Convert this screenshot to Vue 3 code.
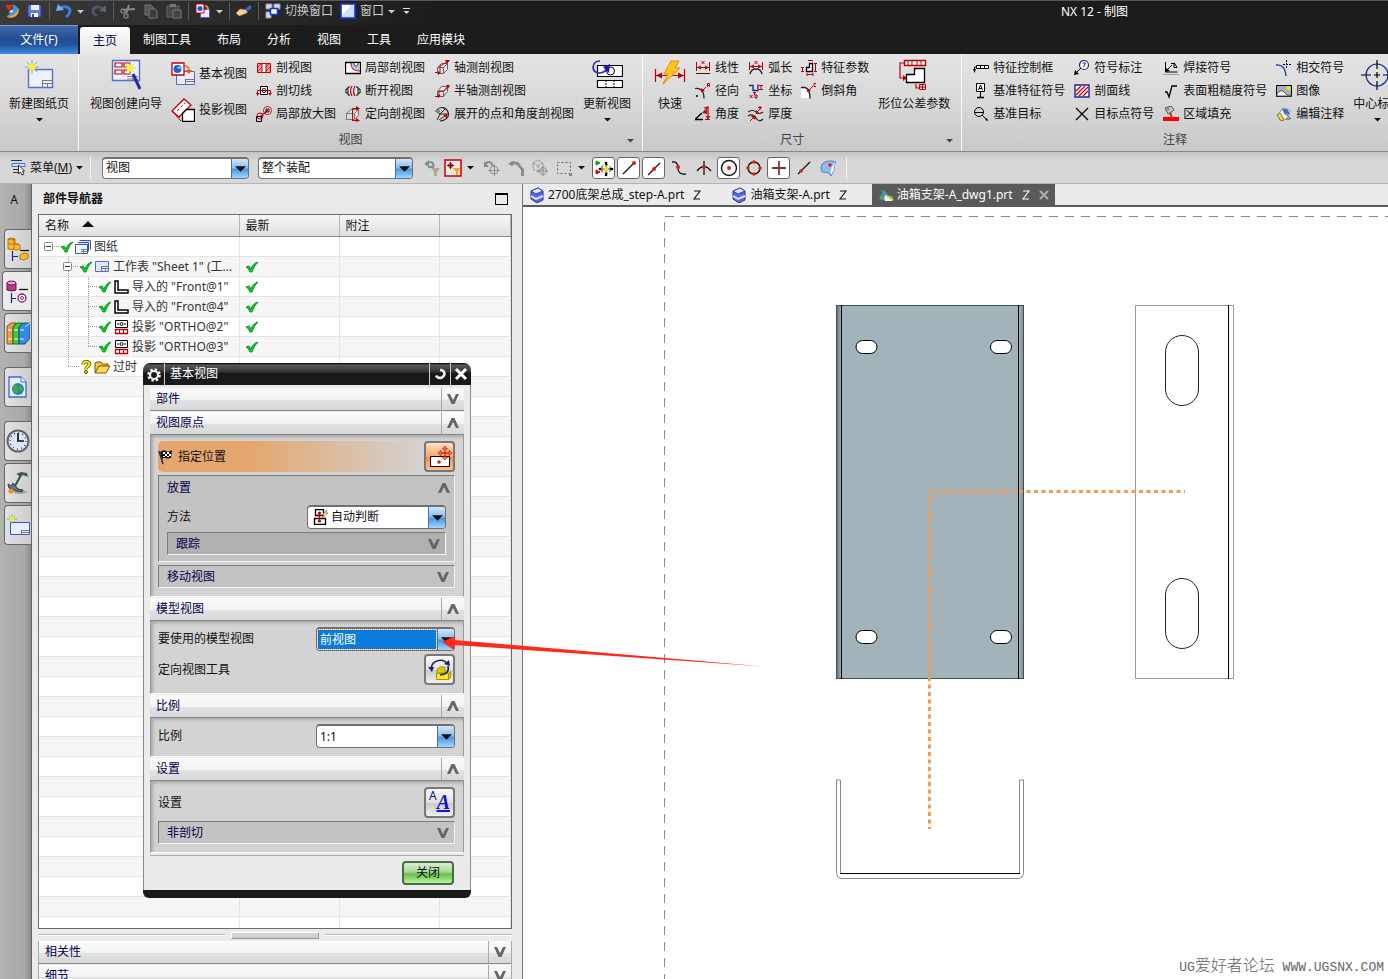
<template>
  <div class="app">
    <!-- Quick access bar -->
    <header class="titlebar">
      <div class="quick">
        <Icon name="logo" />
        <button v-for="q in quickLeft" :key="q.icon" :class="['quick-btn', { sep: q.sep }]" :aria-label="q.label">
          <Icon :name="q.icon" />
          <Icon v-if="q.drop" name="caret" class="quick-caret" :size="7" />
        </button>
        <button class="quick-btn sep text"><Icon name="windows" />切换窗口</button>
        <button class="quick-btn text"><Icon name="win" />窗口<Icon name="caret" :size="7" /></button>
        <button class="quick-btn" aria-label="自定义"><Icon name="customize" :size="9" /></button>
      </div>
      <h1 class="app-title">NX 12 - 制图</h1>
    </header>

    <!-- Ribbon tabs -->
    <nav class="tabs">
      <button class="file-tab">文件(F)</button>
      <button v-for="t in tabs" :key="t" :class="['tab', { active: t === '主页' }]">{{ t }}</button>
    </nav>

    <!-- Ribbon -->
    <section class="ribbon">
      <div v-for="(g, gi) in groups" :key="gi" :class="['group', { last: gi === 3 }]">
        <div class="group-body">
          <div v-for="(col, ci) in g.cols" :key="ci" :class="['col', col.type]">
            <button v-for="b in col.items" :key="b[1]" class="rb">
              <Icon :name="b[0]" :size="sizes[col.type]" />
              <span>{{ b[1] }}</span>
              <Icon v-if="b[2]" name="caret" class="rb-caret" :size="7" />
            </button>
          </div>
        </div>
        <div :class="['group-label', { wide: g.launcher }]">
          {{ g.label }}
          <Icon v-if="g.launcher" name="caret" class="launcher" :size="7" />
        </div>
      </div>
    </section>

    <!-- Selection bar -->
    <section class="selbar">
      <button class="menu-btn">
        <Icon name="menu" /><span>菜单(<u>M</u>)</span><Icon name="caret" :size="7" />
      </button>
      <div class="combo filter">
        <select aria-label="类型过滤器"><option>视图</option></select>
        <span class="combo-arrow"><Icon name="caret" :size="11" /></span>
      </div>
      <div class="combo scope">
        <select aria-label="选择范围"><option>整个装配</option></select>
        <span class="combo-arrow"><Icon name="caret" :size="11" /></span>
      </div>
      <div class="sel-tools">
        <button v-for="s in selTools" :key="s.icon" :class="['sel-btn', { drop: s.drop }]" :aria-label="s.icon">
          <Icon :name="s.icon" :size="18" /><Icon v-if="s.drop" name="caret" :size="7" />
        </button>
      </div>
      <div class="snap-tools">
        <button v-for="s in snaps" :key="s[0]" :class="['snap', { on: s[1] }]" :aria-label="s[0]">
          <Icon :name="s[0]" :size="20" />
        </button>
      </div>
    </section>

    <main class="work">
      <!-- Resource bar -->
      <aside class="rail">
        <span class="rail-a">A</span>
        <button v-for="r in rail" :key="r[0]" :class="['rail-btn', r[1]]" :aria-label="r[0]">
          <Icon :name="r[0]" :size="24" />
        </button>
      </aside>

      <!-- Part navigator -->
      <section class="nav">
        <div class="nav-head">
          <h2>部件导航器</h2>
          <button class="nav-max" aria-label="最大化"></button>
        </div>
        <div class="tree-wrap">
          <table class="tree">
            <colgroup><col class="c-name" /><col class="c-new" /><col class="c-new" /><col /></colgroup>
            <thead>
              <tr>
                <th>名称 <Icon name="sort" class="sort" :size="12" /></th>
                <th>最新</th>
                <th>附注</th>
                <th></th>
              </tr>
            </thead>
            <tbody>
              <tr v-for="(r, i) in treeRows" :key="i">
                <td>
                  <div v-if="r.text" class="node">
                    <svg class="guide" :width="19 + r.level * 19" height="20" v-html="r.guide"></svg>
                    <Icon :name="r.mark" :size="14" />
                    <Icon :name="r.icon" />
                    <span>{{ r.text }}</span>
                  </div>
                </td>
                <td><Icon v-if="r.fresh" name="check" class="fresh" :size="14" /></td>
                <td></td>
                <td></td>
              </tr>
            </tbody>
          </table>
        </div>
        <div class="splitter"><i></i><b></b><i></i></div>
        <div class="nav-foot">
          <button v-for="s in ['相关性', '细节']" :key="s" class="bar">
            <span>{{ s }}</span><span class="bar-arrow"><Icon name="down" :size="14" /></span>
          </button>
        </div>
      </section>

      <!-- Drawing window -->
      <section class="view">
        <div class="docs">
          <button v-for="d in docs" :key="d.name" :class="['doc', { active: d.active }]">
            <Icon :name="d.active ? 'dwg' : 'part'" />
            <span>{{ d.name }}</span>
            <Icon name="mod" :size="10" />
            <Icon v-if="d.active" name="x" :size="10" />
          </button>
        </div>
        <div class="canvas">
          <svg class="drawing" width="100%" height="100%">
            <defs>
              <linearGradient id="bendL"><stop offset="0" stop-color="#5f7275" /><stop offset="1" stop-color="#a2b4ba" /></linearGradient>
              <linearGradient id="bendR"><stop offset="0" stop-color="#a2b4ba" /><stop offset="1" stop-color="#7d9095" /></linearGradient>
            </defs>
            <g transform="translate(-524 -207)" fill="none" shape-rendering="crispEdges">
              <path d="M664.5 979V216.5" stroke="#888" stroke-dasharray="9 7" stroke-dashoffset="4" />
              <path d="M665 216.5H1400" stroke="#888" stroke-dasharray="9 7" />
              <rect x="836.5" y="305.5" width="187" height="373" fill="#a2b4ba" stroke="#444d50" />
              <rect x="837" y="306" width="4" height="372" fill="url(#bendL)" />
              <rect x="1019" y="306" width="4" height="372" fill="url(#bendR)" />
              <path d="M841.5 305V679M1018.5 305V679" stroke="#000" />
              <g fill="#fff" stroke="#000" shape-rendering="auto">
                <rect v-for="hole in holes" :key="hole.join()" :x="hole[0]" :y="hole[1]" width="21" height="13" rx="6.5" />
              </g>
              <rect x="1135.5" y="305.5" width="98" height="373" stroke="#999" />
              <path d="M1228.5 305V679" stroke="#000" />
              <g stroke="#222" shape-rendering="auto">
                <rect x="1165.5" y="335.5" width="33" height="70" rx="16.5" />
                <rect x="1165.5" y="578.5" width="33" height="70" rx="16.5" />
              </g>
              <g shape-rendering="auto">
                <path d="M836.5 780V873.5Q837 878 841 878.5H1019Q1023 878 1023.5 873.5V780H1019.5V873.5M836.5 780H840.5V873.5" stroke="#888" />
                <path d="M840 873.5H1020" stroke="#000" />
              </g>
              <g stroke="#f79a4b" stroke-width="3" shape-rendering="auto">
                <path d="M929 491.5H1185" stroke-dasharray="4 3.5" />
                <path d="M929.5 497V829" stroke-dasharray="4 3.5" />
              </g>
            </g>
          </svg>
          <p class="watermark">UG<span>爱好者论坛</span> WWW.UGSNX.COM</p>
        </div>
      </section>
    </main>

    <!-- Base view dialog -->
    <div class="dialog" role="dialog" aria-label="基本视图">
      <div class="dlg-head">
        <button class="dlg-gear" aria-label="选项"><Icon name="gear" /></button>
        <span class="dlg-title">基本视图</span>
        <button class="dlg-ctl" aria-label="重置"><Icon name="reset" :size="14" /></button>
        <button class="dlg-ctl" aria-label="关闭对话框"><Icon name="close" :size="14" /></button>
      </div>
      <div class="dlg-body">
        <button class="bar"><span>部件</span><span class="bar-arrow"><Icon name="down" :size="14" /></span></button>
        <button class="bar open"><span>视图原点</span><span class="bar-arrow"><Icon name="up" :size="14" /></span></button>
        <div class="sect">
          <div class="pick">
            <Icon name="flag" /><span>指定位置</span>
            <button class="tool hot" aria-label="指定位置"><Icon name="place" :size="24" /></button>
          </div>
          <div class="sub">
            <button class="sub-head"><span>放置</span><Icon name="up" :size="14" /></button>
            <div class="row inner">
              <label for="method">方法</label>
              <div class="combo">
                <Icon name="infer" class="combo-icon" />
                <select id="method"><option>自动判断</option></select>
                <span class="combo-arrow"><Icon name="caret" :size="11" /></span>
              </div>
            </div>
            <button class="sub-head nested"><span>跟踪</span><Icon name="down" :size="14" /></button>
          </div>
          <button class="sub-head boxed"><span>移动视图</span><Icon name="down" :size="14" /></button>
        </div>

        <button class="bar open"><span>模型视图</span><span class="bar-arrow"><Icon name="up" :size="14" /></span></button>
        <div class="sect">
          <div class="row">
            <label for="model-view">要使用的模型视图</label>
            <div class="combo picked">
              <select id="model-view"><option>前视图</option></select>
              <span class="combo-arrow"><Icon name="caret" :size="11" /></span>
            </div>
          </div>
          <div class="row tall">
            <span>定向视图工具</span>
            <button class="tool" aria-label="定向视图工具"><Icon name="orient" :size="24" /></button>
          </div>
        </div>

        <button class="bar open"><span>比例</span><span class="bar-arrow"><Icon name="up" :size="14" /></span></button>
        <div class="sect">
          <div class="row">
            <label for="scale">比例</label>
            <div class="combo">
              <select id="scale"><option>1:1</option></select>
              <span class="combo-arrow"><Icon name="caret" :size="11" /></span>
            </div>
          </div>
        </div>

        <button class="bar open"><span>设置</span><span class="bar-arrow"><Icon name="up" :size="14" /></span></button>
        <div class="sect">
          <div class="row tall">
            <span>设置</span>
            <button class="tool aa" aria-label="设置"><small>A</small><em>A</em></button>
          </div>
          <button class="sub-head boxed"><span>非剖切</span><Icon name="down" :size="14" /></button>
        </div>
        <div class="dlg-foot"><button class="ok">关闭</button></div>
      </div>
    </div>

    <svg class="pointer" width="330" height="40" viewBox="0 0 330 40">
      <path d="M0 9L13 3L12 7L323 33.5L12 12L12 17Z" fill="#ff2a1a" />
    </svg>
  </div>
</template>

<script setup>
import { h } from 'vue'

const R = '#c00008'
const icons = {
  caret: [7, '<path d="M0 2h7L3.5 5.5z" fill="currentColor"/>'],
  customize: [9, '<path d="M1 1.5h7" stroke="#ddd"/><path d="M1.5 4h6L4.5 7z" fill="#ddd"/>'],
  sort: [12, '<path d="M0 9L6 3l6 6z" fill="#111"/>'],
  down: [14, '<path d="M1 2h3l3 6 3-6h3L8.5 12h-3z" fill="#666"/>'],
  up: [14, '<path d="M1 12h3l3-6 3 6h3L8.5 2h-3z" fill="#666"/>'],
  mod: [10, '<path d="M2 1h6L2 9h6" fill="none" stroke="currentColor" stroke-width="1.1"/>'],
  x: [10, '<path d="M1 1l8 8M9 1l-8 8" stroke="#aaa" stroke-width="2.4"/>'],
  close: [14, '<path d="M2 2l10 10M12 2L2 12" stroke="#fff" stroke-width="3"/>'],
  reset: [14, '<path d="M7 3c5 0 6 5 2 7.500-3 1-5 0-6-2" fill="none" stroke="#eee" stroke-width="2.6"/>'],
  gear: [16, '<circle cx="8" cy="9" r="5.500" fill="none" stroke="#eee" stroke-width="2.600" stroke-dasharray="2.300 2.020"/><circle cx="8" cy="9" r="4" fill="none" stroke="#eee" stroke-width="2.200"/>'],
  check: [14, '<path d="M1 7l3-1 2 3c1-3 3-6 7-7-3 3-4.500 6-6 10H5C4 10 3 8 1 7z" fill="#17c92f" stroke="#079a1c"/>'],
  quest: [14, '<path d="M4 5c0-5 8-4 6 0C9 7 7 7 7 9.500" fill="none" stroke="#555000" stroke-width="3.400"/><path d="M4 5c0-5 8-4 6 0C9 7 7 7 7 9.500" fill="none" stroke="#f4ee10" stroke-width="2"/><circle cx="7" cy="12" r="1.500" fill="#f4ee10" stroke="#555000"/>'],

  // quick access
  logo: [18, '<path d="M3 15C8 11 11 8 10 2c6 1 8 6 3 11-3 3-7 3-10 2z" fill="#3b9be0"/><path d="M3 15c8 0 13-5 13-10 2 4 0 9-5 11-3 1-6 1-8-1z" fill="#f5a31d"/><path d="M1 2l10 0-5 7z" fill="#e02b20"/><path d="M5 11l4-4 1 3z" fill="#fff"/>'],
  save: [16, '<path d="M1 2h13v12H2L1 13z" fill="#5f7ce0" stroke="#2b3f9c"/><path d="M4 2h8v5H4z" fill="#eef"/><path d="M4 10h7v4H4z" fill="#fff"/><path d="M5 11h2v3H5z" fill="#34c"/>'],
  undo: [16, '<path d="M4 5c6-3 10 0 10 3s-2 4-4 6" fill="none" stroke="#3f7bd6" stroke-width="3"/><path d="M0 8l2-7 6 6z" fill="#79aaf0"/>'],
  redo: [16, '<path d="M12 6C7 2 2 4 2 8c0 3 2 4 4 5" fill="none" stroke="#4a5562" stroke-width="3"/><path d="M15 9V2L8 8z" fill="#5a6674"/>'],
  cut: [16, '<path d="M3 7l12-1M6 11L9 2" stroke="#8a8a80" stroke-width="2"/><circle cx="3" cy="8" r="2" fill="none" stroke="#777" stroke-width="1.500"/><circle cx="6" cy="13" r="2" fill="none" stroke="#777" stroke-width="1.500"/>'],
  copy: [16, '<path d="M2 2h6l2 2v8H2z" fill="#555" stroke="#777"/><path d="M6 6h6l2 2v7H6z" fill="#3d3d3d" stroke="#777"/>'],
  paste: [16, '<path d="M1 3h12v11H1z" fill="#4a4640" stroke="#666"/><path d="M4 1h6v3H4z" fill="#777"/><path d="M7 7h8v8H7z" fill="#444" stroke="#777"/>'],
  qview: [16, `<path d="M5.500 6.500h9v8h-9z" fill="#e8ecff" stroke="#4b5fc0"/><path d="M1 1h8v9H1z" fill="#fff" stroke="${R}"/><circle cx="5" cy="5.500" r="2.600" fill="#2358c8"/><path d="M10 3q3 0 3 4" fill="none" stroke="#e58a2a" stroke-width="2"/>`],
  hand: [16, '<path d="M0 10l4-4 8 1-1 3-5 2-3 1z" fill="#f3cf9a" stroke="#a37a40" stroke-width=".6"/><path d="M9 6l5-4 2 3-5 4z" fill="#3a63b8"/>'],
  windows: [16, '<path d="M1 1h6v5H1zM9 1h6v5H9zM1 9h5v6H1z" fill="#d8dce8" stroke="#8d97ad"/><path d="M5.500 5.500h7v6h-7z" fill="#fff" stroke="#1034e8" stroke-width="1.600"/>'],
  win: [16, '<path d="M1 1h14v14H1z" fill="#cfe0ff" stroke="#1034e8" stroke-width="1.600"/><path d="M2 2h9L2 12z" fill="#fff"/>'],

  // ribbon, large
  newsheet: [32, '<path d="M5.500 10.500h24v18h-24z" fill="#eef1ff" stroke="#5a6ec4" stroke-width="1.400"/><path d="M19 21.500h10M19 24.500h10M19.500 21v7M24.500 24v4" stroke="#777"/><path d="M9 1v14M2 8h14M4 3l10 10M14 3L4 13" stroke="#79b4b4"/><circle cx="9" cy="8" r="3.500" fill="#f7f03a"/>'],
  wizard: [32, `<path d="M2.500 1.500h27v20h-27z" fill="#eef1ff" stroke="#5a6ec4" stroke-width="1.400"/><path d="M5 4h7v4H5zM14 4h6v4h-6zM5 11h7v4H5zM14 11h6v4h-6z" fill="#fff" stroke="${R}" stroke-width="1.200"/><path d="M17 17.500h11M17 20h11M22.500 17v4" stroke="#888"/><path d="M20 3v12M14 9h12M16 5l8 8M24 5l-8 8" stroke="#d2d250"/><circle cx="20" cy="9" r="3.500" fill="#f7f03a"/><path d="M23 15l7 15" stroke="#2a2aa0" stroke-width="3"/>`],
  update: [32, '<path d="M6.500 6.500h25v11h-25zM6.500 21.500h25v7h-25z" fill="#fff" stroke="#000" stroke-width="1.200"/><circle cx="19.500" cy="12" r="4" fill="none" stroke="#000"/><path d="M15 21v8M23 21v8" stroke="#000" stroke-dasharray="2 1"/><path d="M9 2C0 2 0 14 8 14q5 0 8-4" fill="none" stroke="#2a22d0" stroke-width="1.700"/><path d="M12 8l7-3-1 9z" fill="#2018b0"/>'],
  rapid: [32, `<path d="M1.500 10v13M30.500 10v13M2 16.500h28" stroke="${R}" stroke-width="1.200"/><path d="M2 16.500l6-3v6zM30 16.500l-6-3v6z" fill="${R}"/><path d="M17 2h8l-4 7h5L9 25l5-10h-4z" fill="#ffc61c" stroke="#e88a10"/>`],
  gdt: [32, `<path d="M6.500 1.500h21v5h-21z" fill="#fff" stroke="${R}" stroke-width="1.400"/><path d="M10 2v4M14 2v4M19 2v4M23 2v4" stroke="${R}"/><path d="M6 4H2v15h5M18 25v4h4" fill="none" stroke="${R}" stroke-width="1.200"/><path d="M5 16l4 3-4 3z" fill="${R}"/><path d="M8.500 15.500h8v-6h10v14h-18z" fill="#fff" stroke="#000" stroke-width="1.300"/><path d="M21.500 25.500h6v5h-6zM24.500 26v5M22 28h6" fill="none" stroke="${R}"/>`],
  center: [32, '<circle cx="16" cy="16" r="11" fill="none" stroke="#1c2fa0" stroke-width="1.200"/><path d="M16 1v9M16 22v9M0 16h10M22 16h10M13 16h6M16 13v6" stroke="#000" stroke-width="1.200"/>'],

  // ribbon, medium
  base: [24, `<path d="M5.500 9.500h18v13h-18z" fill="#e6ebff" stroke="#5a6ec4"/><path d="M14 17.500h9M14 19.500h9M14.500 17v5" stroke="#777"/><path d="M1 1h12v12H1z" fill="#fff" stroke="${R}" stroke-width="1.300"/><circle cx="6.500" cy="7" r="4" fill="#2260c8"/><path d="M5 6l4-2 1 3z" fill="#9ac6ff"/><path d="M14 4q4 0 4 5" fill="none" stroke="#e58a2a" stroke-width="2"/><path d="M14 8h7l-3 4z" fill="#e05a1a"/>`],
  proj: [24, `<path d="M1 13L13 1l7 6L8 19z" fill="#fff" stroke="${R}" stroke-width="1.300"/><path d="M6 13l8-8" stroke="${R}" stroke-dasharray="3 2"/><path d="M1 13l9 10" stroke="${R}"/><path d="M11.500 23.500v-8l4-4h8v12z" fill="#fff" stroke="#000" stroke-width="1.300"/>`],

  // ribbon, small
  section: [16, `<path d="M1.500 3.500h13v9h-13z" fill="#fff" stroke="${R}"/><path d="M2 4h4v8H2zM10 4h4v8h-4z" fill="#e0a0a0"/><path d="M2 7l3-3M2 11l4-4M10 7l3-3M10 11l4-4" stroke="${R}" stroke-width=".8"/><path d="M6 3.500v9M10 3.500v9" stroke="${R}"/>`],
  cutline: [16, `<path d="M4.500 3.500h7v8h-7z" fill="#fff" stroke="#000"/><circle cx="8" cy="7.500" r="2" fill="none" stroke="#000"/><path d="M1.500 11V7.500h13V11" fill="none" stroke="${R}"/><path d="M0 10h3.500l-2 3zM12.500 10H16l-2 3z" fill="${R}"/>`],
  detail: [16, `<circle cx="11.500" cy="4.500" r="4" fill="#fff" stroke="${R}"/><circle cx="4" cy="10" r="3" fill="none" stroke="${R}"/><path d="M4 11l8-7" stroke="${R}" stroke-width="1.200"/><path d="M.5 10.500h5v5h-5zM10 3h3v3h-3z" fill="none" stroke="#000"/>`],
  partial: [16, `<path d="M.5 2.500h15v11H.5z" fill="#fff" stroke="#000" stroke-width="1.300"/><path d="M6 3c0 5 2 8 9 8V3z" fill="#b8c0d8"/><path d="M6 3c0 5 2 8 9 8" fill="none" stroke="${R}"/><path d="M9 3c0 4 4 4 4 0" fill="#fff" stroke="#224"/>`],
  broken: [16, `<path d="M5 4H3v8h2M11 4h2v8h-2M3 6H1v4h2M13 6h2v4h-2" fill="#fff" stroke="#000"/><path d="M7 3q-3 5 0 10M10 3q-3 5 0 10" fill="none" stroke="${R}" stroke-width="1.200"/>`],
  oriented: [16, `<path d="M1.500 7.500h8v6h-8zM1.500 7.500l4-4h8v6l-4 4M9.500 7.500l4-4" fill="#ddd" stroke="#777"/><path d="M7.500 15V2.500h5M7 14.500h5" fill="none" stroke="${R}"/><path d="M11 0l4 2.500-4 2zM11 12l4 2.500-4 1.500z" fill="${R}"/>`],
  axo: [16, `<path d="M3.500 7.500h6v6h-6zM3.500 7.500l4-4h6v6l-4 4M9.500 7.500l4-4" fill="#e4e4e4" stroke="#666"/><path d="M1 12.500h5V6l7-4" fill="none" stroke="${R}"/><path d="M11 0h5l-3 4zM4 11l3 2-3 2z" fill="${R}"/>`],
  halfaxo: [16, `<path d="M3.500 8.500h6v5h-6zM3.500 8.500l4-5h6v5l-4 5M9.500 8.500l4-5" fill="#e4e4e4" stroke="#666"/><path d="M1 13.500h4V8h5l4-3.500" fill="none" stroke="${R}"/><path d="M12 2h4l-2 4zM4 11l3 2-3 2z" fill="${R}"/>`],
  unfold: [16, `<path d="M3 4c3-4 9-3 11 2s-3 9-8 9" fill="none" stroke="#222" stroke-width="1.200"/><path d="M2 5l4 3-3 6M6 8l5-5M6 8h8" fill="none" stroke="#222"/><path d="M1 4h5v2H1z" fill="#888"/><path d="M9 9l4-1v4z" fill="${R}"/><path d="M5 14l6-4" stroke="${R}"/>`],
  linear: [16, `<path d="M1.500 2v9M14.500 2v9M2 7.500h12" stroke="${R}"/><path d="M2 7.500l4-2v4zM14 7.500l-4-2v4z" fill="${R}"/><path d="M6.500 1l3 3M9.500 1l-3 3" stroke="${R}"/><path d="M1 13.500h14" stroke="#222"/>`],
  arc: [16, `<path d="M1.500 2v8M14.500 2v8M2 6.500h12" stroke="${R}"/><path d="M2 6.500l4-2v4zM14 6.500l-4-2v4z" fill="${R}"/><path d="M6.500 1l3 3M9.500 1l-3 3" stroke="${R}"/><path d="M2 14q1-5 6-5t6 5" fill="none" stroke="#222" stroke-width="1.400"/>`],
  feature: [16, `<path d="M5.500 11.500v-4h3v-4h3v8z" fill="#fff" stroke="#000" stroke-width="1.300"/><path d="M1.500 7v5M0 7.500h3M0 11.500h3M14.500 3v9M13 3.500h3M13 11.500h3M6 14.500h6M6 13v3M12 13v3M7 .5h5" stroke="${R}"/>`],
  radial: [16, `<path d="M0 5.500q9-1 9 10" fill="none" stroke="#222" stroke-width="1.200"/><path d="M7 8l4-4M12.500 4V.5h2v2h-2M13 2l2 2" fill="none" stroke="${R}"/><path d="M6 9V5l4 3z" fill="${R}"/><circle cx="2" cy="13" r="1" fill="#000"/>`],
  coord: [16, `<path d="M1 2.500h4v5h5v-6" fill="none" stroke="#1c2490" stroke-width="1.300"/><path d="M11 2.500h4M11 6.500h4M13 2v5M5 9.500h3M6.500 9v3M1.500 12l3 3M4.500 12l-3 3M7 12h2v3H7z" fill="none" stroke="${R}"/>`],
  chamfer: [16, `<path d="M0 5h4l4 4v6H0z" fill="#fff"/><path d="M0 4.500h4q5 1 5 11" fill="none" stroke="#222" stroke-width="1.300"/><path d="M8 7l4-4M15 .5h-2v3h2" fill="none" stroke="${R}"/><path d="M6 9V5l4 3z" fill="${R}"/>`],
  angle: [16, `<path d="M0 13.500h8M0 13.500L7 7" fill="none" stroke="#000" stroke-width="1.300"/><path d="M9 2l4-1v12M10 13.500h5M8 7l5-6" fill="none" stroke="${R}" stroke-width="1.200"/><path d="M8 7l4-3v4zM10.500 10h5l-2.500 3z" fill="${R}"/>`],
  thick: [16, `<path d="M0 6q5-3 8 0t7 0M0 10q5-3 8 2t7 1" fill="none" stroke="#222" stroke-width="1.200"/><path d="M2 15l4-4M8 7l5-5M10 1.500h4M12 0v4" stroke="${R}"/><path d="M3 10h5l-1 4zM8 4v4h4z" fill="${R}"/>`],
  fcf: [16, '<path d="M3.500 5.500h12v3h-12z" fill="#fff" stroke="#000"/><path d="M7.500 5v3M11.500 5v3" stroke="#000"/><path d="M3 7H1.500v4" fill="none" stroke="#000"/><path d="M0 9h3l-1.500 4z" fill="#000"/>'],
  datum: [16, '<path d="M3.500.5h8v8h-8z" fill="#fff" stroke="#000"/><path d="M5.500 7l2-5 2 5M6 5.500h3M7.500 9v5" fill="none" stroke="#000"/><path d="M4 14.500h7" stroke="#000" stroke-width="1.600"/>'],
  target: [16, '<circle cx="6" cy="6" r="4.500" fill="none" stroke="#000"/><path d="M1 6.500h10M9 9l5 5" stroke="#000"/><path d="M14 12l1 3-3-1z"/>'],
  balloon: [16, '<circle cx="10" cy="5" r="4.500" fill="#fff" stroke="#1c2490" stroke-width="1.200"/><path d="M8.500 3h3L9.500 7" fill="none" stroke="#1c2490"/><path d="M7 8l-6 6" stroke="#000"/><path d="M0 15l1-5 4 4z"/>'],
  hatch: [16, `<path d="M1 2h14v12H1z" fill="#fff" stroke="#1c2490" stroke-width="1.400"/><path d="M2 8l5-5M2 12l9-9M5 13l9-9M9 13l5-5" stroke="${R}" stroke-width="1.200"/>`],
  cross: [16, '<path d="M2 2l12 12M14 2L2 14" stroke="#000" stroke-width="1.200"/>'],
  weld: [16, '<path d="M0 14.500h16" stroke="#8aa0b4"/><path d="M2.500 2v10h12M3 11l6-6M8 3.500h3v4h3l-3-5" fill="none" stroke="#000"/><path d="M2 12V7l5 4z"/>'],
  rough: [16, '<path d="M2 9h2l2 5L9 3h5" fill="none" stroke="#000" stroke-width="1.300"/>'],
  fill: [16, '<path d="M0 11h16v4H0z" fill="#f00"/><path d="M7 6l2 6" stroke="#b33" stroke-width="2"/><path d="M2 2l6-2 3 4-6 4z" fill="#ccc" stroke="#555"/><circle cx="5" cy="3" r="1.500" fill="#888"/>'],
  isect: [16, '<path d="M0 5q9-1 10 11" fill="none" stroke="#1c3a9a" stroke-width="1.300"/><path d="M10.500 0v8M7 4.500h8" stroke="#000" stroke-dasharray="2 1"/>'],
  image: [16, '<path d="M.5 2.500h15v11H.5z" fill="#a9b0bb" stroke="#000"/><path d="M1 11q4-6 8-1t6 1v2H1z" fill="#fff" stroke="#555"/><circle cx="12.500" cy="5" r="2" fill="#ffe900"/>'],
  edit: [16, '<path d="M2 9l5-7 7 2-3 9-7 1z" fill="#f6f3da" stroke="#999"/><path d="M6 3h5l3 5-5 1z" fill="#3f72c8"/><path d="M1 9l3-2 2 3 2 4-3 1z" fill="#f3d83a" stroke="#775"/><path d="M11 9l4 4M10 13h4" stroke="#555"/>'],

  // selection bar
  menu: [16, '<path d="M2 3.500h13v3H2z" fill="#cfe0ff" stroke="#3d74d8"/><path d="M1 .5h11M3 9.500h6M3 12.500h7" stroke="#333"/><path d="M8.500 5v9l2-2 1.500 3 2-1-1.500-3h2z" fill="#fff" stroke="#333"/>'],
  resetf: [18, '<path d="M3 5c4-4 9-1 7 3H5" fill="none" stroke="#7d918f" stroke-width="2"/><path d="M1 5l5-4v7z" fill="#7d918f"/><path d="M8 9h9l-3 4v4h-3v-4z" fill="#b3a994"/>'],
  detailf: [18, `<path d="M1 1h16v16H1z" fill="#ece6e2" stroke="${R}" stroke-width="1.500"/><path d="M3 6.500h7M6.500 3v7" stroke="#800"/><circle cx="6.500" cy="6.500" r="2" fill="none" stroke="#800"/><path d="M9 9h7l-2 4v3h-2v-3z" fill="#f5a31d"/>`],
  undosel: [18, '<path d="M2 5q5-5 8 2" fill="none" stroke="#888" stroke-width="2"/><path d="M1 2v6h5z" fill="#888"/><circle cx="11" cy="11" r="4" fill="none" stroke="#998f8f"/><path d="M5 11.500h12M11.500 5v12" stroke="#998f8f"/>'],
  hammer: [18, '<path d="M1 5l4-3 6 1 3 3-3 1-3-2-3 2zM10 6h3l4 4v7h-3v-6z" fill="#888f88"/>'],
  cubesel: [18, '<path d="M2 4l5-3 5 3v6l-5 3-5-3zM2 4l5 3 5-3M7 7v6" fill="none" stroke="#888" stroke-dasharray="2 1"/><circle cx="12" cy="12" r="3.500" fill="none" stroke="#a08c8c"/><path d="M7 12h10M12 7v10" stroke="#a08c8c"/>'],
  rectsel: [18, '<path d="M2.500 3.500h13v11h-13z" fill="none" stroke="#666" stroke-dasharray="2 2"/><path d="M14 14h3v3h-3z" fill="#a77"/>'],
  s1: [20, '<path d="M2 3l4 2-4 2z" fill="#0a0" stroke="#0a0"/><path d="M2 12l4 2-4 2z" fill="#d00" stroke="#d00"/><path d="M12 4v14M5 11h14" stroke="#111"/><circle cx="12" cy="11" r="4.500" fill="none" stroke="#111" stroke-dasharray="3 2"/><circle cx="12" cy="11" r="2.500" fill="#f8dc20"/><circle cx="12" cy="5" r="1.300"/><circle cx="12" cy="17" r="1.300"/><circle cx="6" cy="11" r="1.300"/><circle cx="18" cy="11" r="1.300"/>'],
  s2: [20, '<path d="M4 16L15 5" stroke="#111" stroke-width="1.300"/><circle cx="15" cy="5" r="2" fill="#d21"/>'],
  s3: [20, '<path d="M4 17L16 5" stroke="#111" stroke-width="1.300"/><circle cx="10" cy="11" r="2" fill="#d21"/>'],
  s4: [20, '<path d="M3 4q6-1 6 6t8 6" fill="none" stroke="#111" stroke-width="1.300"/><circle cx="9" cy="9" r="2" fill="#d21"/>'],
  s5: [20, '<path d="M10 3v14M3 13q7-9 14 0" fill="none" stroke="#111" stroke-width="1.300"/><circle cx="10" cy="9" r="2" fill="#d21"/>'],
  s6: [20, '<circle cx="10" cy="10" r="7.500" fill="none" stroke="#111" stroke-width="1.400"/><circle cx="10" cy="10" r="2" fill="#d21"/>'],
  s7: [20, '<circle cx="10" cy="10" r="6" fill="none" stroke="#111" stroke-width="1.400"/><g fill="#d21"><circle cx="10" cy="4" r="1.800"/><circle cx="10" cy="16" r="1.800"/><circle cx="4" cy="10" r="1.800"/><circle cx="16" cy="10" r="1.800"/></g>'],
  s8: [20, '<path d="M10 3v14M3 10h14" stroke="#111" stroke-width="1.300"/><circle cx="10" cy="10" r="1.800" fill="#d21"/>'],
  s9: [20, '<path d="M4 16L16 4" stroke="#111" stroke-width="1.300"/><circle cx="7" cy="13" r="1.800" fill="#d21"/>'],
  s10: [20, '<path d="M3 6q6-5 14-2-3 4-2 8l-3 6q-1-4-9-4-2-4 0-8z" fill="#8fbcf0" stroke="#4f82bf"/><path d="M12 17q-2-7 5-13-3 5-2 8z" fill="#e7f2ff"/><circle cx="11" cy="7" r="1.800" fill="#d21"/>'],

  // resource bar
  asm: [24, '<path d="M2 2l3-1 4 1v5l5 1v4l-3 1-9-1z" fill="#f7bd2a" stroke="#b87408"/><path d="M2 7h11M8 2v10M2 2l4 1 3-1" fill="none" stroke="#b87408"/><path d="M14 13.500h9" stroke="#111" stroke-width="1.300"/><path d="M6.500 14v10M6 19.500h6" stroke="#1c2490" stroke-width="1.200"/><path d="M14 18l4-2 4 1v4l-4 2-4-1z" fill="#f7bd2a" stroke="#b87408"/>'],
  partnav: [24, '<path d="M2 4v7q4 2 9 0V4z" fill="#b23c8e" stroke="#6b1152"/><ellipse cx="6.500" cy="4" rx="4.500" ry="2" fill="#e7a4d0" stroke="#6b1152"/><path d="M14 10.500h9" stroke="#111" stroke-width="1.300"/><path d="M6.500 14v10M6 19.500h5" stroke="#1c2490" stroke-width="1.200"/><circle cx="17" cy="19" r="4" fill="#fff" stroke="#8a1a6a" stroke-width="1.300"/><circle cx="17" cy="19" r="1.500" fill="none" stroke="#8a1a6a"/>'],
  library: [24, '<path d="M1 5l4-3h5L7 6v17H1z" fill="#e3a05c" stroke="#8a5210"/><path d="M7 6l4-4h5l-3 4v17H7z" fill="#42c832" stroke="#15740e"/><path d="M13 6l4-4h7v15l-5 6h-6z" fill="#2f8be4" stroke="#104f9a"/><path d="M19 6l5-4" stroke="#bfe0ff"/><path d="M2 9h4M2 18h4M8 9h4M8 18h4M14 9h4M14 18h4" stroke="#fff"/>'],
  html: [24, '<path d="M3 2h12l5 5v15H3z" fill="#e6eefc" stroke="#3a6ad0" stroke-width="1.300"/><path d="M15 2v5h5" fill="#fff" stroke="#3a6ad0"/><circle cx="12" cy="14" r="6" fill="#2f7cc0"/><path d="M7 11q4-3 5 1t-1 6-4-4z" fill="#3fae3c"/><path d="M14 10l3 2-1 5-3-2z" fill="#3fae3c"/>'],
  clock: [24, '<circle cx="12" cy="12" r="10.500" fill="#dce8f8" stroke="#5d646c" stroke-width="2"/><circle cx="12" cy="12" r="8" fill="none" stroke="#345" stroke-width="1.500" stroke-dasharray="1 3.190"/><path d="M12 4v8h6" fill="none" stroke="#111" stroke-width="1.700"/>'],
  tools: [24, '<path d="M10 3l5-2 6 1 1 4-5-2-3 2-2-2z" fill="#495852"/><path d="M15 4l-6 11" stroke="#354" stroke-width="2"/><ellipse cx="14" cy="21" rx="7" ry="2" fill="#aaa"/><path d="M2 13l3 2 2-3 5 6 5 1-1 2-6-1-7-3z" fill="#67728a" stroke="#333c50"/><circle cx="5" cy="20" r="2.500" fill="#f28c1c"/>'],
  sheet: [24, '<path d="M4.500 9.500h19v12h-19z" fill="#e8edff" stroke="#3a56c8"/><path d="M15 17.500h8M15 19.500h8M15.500 17v4" stroke="#777"/><path d="M6 1v10M1 6h10M3 3l6 6M9 3L3 9" stroke="#7ab0a0"/><circle cx="6" cy="6" r="2.500" fill="#f2ea3a"/>'],

  // navigator
  drawings: [16, '<path d="M4.500 1.500h11v9M2.500 3.500h11v9" fill="#dbe3ff" stroke="#3c55a8"/><path d="M.5 5.500h12v9H.5z" fill="#f4f6ff" stroke="#3c55a8"/><path d="M6 10.500h6M6 12.500h6M8.500 10v4" stroke="#777"/>'],
  page: [16, '<path d="M1.500 2.500h13v10h-13z" fill="#dfe5ff" stroke="#5b6bb0"/><path d="M7 7.500h7M7 9.500h7M7.500 7v5M11.500 9v3" stroke="#777"/>'],
  imported: [16, '<path d="M2 2h3v9h10v3H2z" fill="#fff" stroke="#000" stroke-width="1.500"/>'],
  ortho: [16, `<path d="M2.500 1.500h12v7h-12z" fill="#fff" stroke="#000"/><circle cx="8.500" cy="5" r="1.500" fill="none" stroke="#000"/><path d="M4 5h2M11 5h2" stroke="#000"/><path d="M2.500 10.500h12v4h-12z" fill="#fff" stroke="${R}" stroke-width="1.300"/><path d="M6.500 11v3M10.500 11v3" stroke="${R}"/>`],
  folder: [16, '<path d="M1 13V4l2-1h4l1 2h6v3" fill="#f5c440" stroke="#7a5200"/><path d="M1 14l4-7h11l-4 7z" fill="#ffd95e" stroke="#7a5200"/>'],

  part: [16, '<path d="M2 4l7-3 5 3v9l-6 3-6-4z" fill="#5d65e8" stroke="#2a2f98"/><path d="M2 4l5 3 7-3-5-3z" fill="#dfe6ff" stroke="#3a40b0"/><path d="M2 9l5 3 7-3" fill="none" stroke="#dfe6ff" stroke-width="2"/>'],
  dwg: [16, '<path d="M1 12L6 3l4 5 5 1v4l-6 1z" fill="#38b060"/><path d="M5 5l4 4 6 5H7z" fill="#e8f4ff"/><path d="M3 2l5 6-3 3z" fill="#3e8ae0"/><path d="M9 9l6 4" stroke="#fc3" stroke-width="2"/>'],

  // dialog
  flag: [16, '<path d="M1 2l4 13" stroke="#222a60" stroke-width="1.500"/><path d="M2 3q4-3 6-1t6-1l-1 8q-4 1-5 0t-4 1z" fill="#111"/><path d="M5 3h2v2H5zM9 3h2v2H9zM7 5h2v2H7zM11 5h2v2h-2zM5 7h2v1H5zM9 7h2v1H9z" fill="#fff"/>'],
  place: [24, '<path d="M2.500 11.500h19v10h-19z" fill="#fff" stroke="#000"/><path d="M17 2v12M11 8h12" stroke="#d2280c" stroke-width="1.300"/><path d="M14.500 4L17 1l2.500 3zM14.500 12l2.500 3 2.500-3zM13 5.500L10 8l3 2.500zM21 5.500L24 8l-3 2.500z" fill="#f8b070" stroke="#d2280c"/><circle cx="11" cy="17" r="1.800" fill="#d21"/>'],
  infer: [16, `<path d="M3.500.5h8v6h-8zM2.500 9.500h11v6h-11z" fill="#fff" stroke="#000" stroke-width="1.300"/><path d="M7.500 3v10" stroke="${R}" stroke-width="1.300"/><circle cx="7.500" cy="4" r="1.600" fill="${R}"/><circle cx="7.500" cy="12" r="1.600" fill="${R}"/><path d="M15 1l-5 5h2l-2 3 6-5h-2z" fill="#f5ea3c" stroke="#776" stroke-width=".7"/>`],
  orient: [24, '<path d="M8.500 15.500h12v6h-12z" fill="#f7ea20" stroke="#a89400"/><path d="M20.500 15.500l2-2v6l-2 2zM9 11l3-2h5v6H9z" fill="#d8c616" stroke="#a89400"/><path d="M3 11C4 1 16 0 19 6M20 8q2 8-8 9" fill="none" stroke="#14246c" stroke-width="1.600"/><path d="M0 9h6l-2 5zM16 6l6 2-1-6z" fill="#14246c"/>'],
}

// small helper: renders one glyph of the table above
const Icon = (props) => {
  const [box, body] = icons[props.name]
  const s = props.size || 16
  return h('svg', { class: 'ic', width: s, height: s, viewBox: `0 0 ${box} ${box}`, innerHTML: body })
}
Icon.props = ['name', 'size']

const quickLeft = [
  { icon: 'save', label: '保存' },
  { icon: 'undo', label: '撤销', sep: true, drop: true },
  { icon: 'redo', label: '重做' },
  { icon: 'cut', label: '剪切', sep: true },
  { icon: 'copy', label: '复制' },
  { icon: 'paste', label: '粘贴' },
  { icon: 'qview', label: '重复命令', sep: true, drop: true },
  { icon: 'hand', label: '触控', sep: true },
]

const tabs = ['主页', '制图工具', '布局', '分析', '视图', '工具', '应用模块']

const sizes = { big: 32, mid: 24, small: 16 }
const groups = [
  { label: '', cols: [{ type: 'big', items: [['newsheet', '新建图纸页', true]] }] },
  {
    label: '视图',
    launcher: true,
    cols: [
      { type: 'big', items: [['wizard', '视图创建向导']] },
      { type: 'mid', items: [['base', '基本视图'], ['proj', '投影视图']] },
      { type: 'small', items: [['section', '剖视图'], ['cutline', '剖切线'], ['detail', '局部放大图']] },
      { type: 'small', items: [['partial', '局部剖视图'], ['broken', '断开视图'], ['oriented', '定向剖视图']] },
      { type: 'small', items: [['axo', '轴测剖视图'], ['halfaxo', '半轴测剖视图'], ['unfold', '展开的点和角度剖视图']] },
      { type: 'big', items: [['update', '更新视图', true]] },
    ],
  },
  {
    label: '尺寸',
    launcher: true,
    cols: [
      { type: 'big', items: [['rapid', '快速']] },
      { type: 'small', items: [['linear', '线性'], ['radial', '径向'], ['angle', '角度']] },
      { type: 'small', items: [['arc', '弧长'], ['coord', '坐标'], ['thick', '厚度']] },
      { type: 'small', items: [['feature', '特征参数'], ['chamfer', '倒斜角']] },
      { type: 'big', items: [['gdt', '形位公差参数']] },
    ],
  },
  {
    label: '注释',
    cols: [
      { type: 'small', items: [['fcf', '特征控制框'], ['datum', '基准特征符号'], ['target', '基准目标']] },
      { type: 'small', items: [['balloon', '符号标注'], ['hatch', '剖面线'], ['cross', '目标点符号']] },
      { type: 'small', items: [['weld', '焊接符号'], ['rough', '表面粗糙度符号'], ['fill', '区域填充']] },
      { type: 'small', items: [['isect', '相交符号'], ['image', '图像'], ['edit', '编辑注释']] },
      { type: 'big', items: [['center', '中心标记', true]] },
    ],
  },
]

const selTools = [
  { icon: 'resetf' },
  { icon: 'detailf', drop: true },
  { icon: 'undosel' },
  { icon: 'hammer' },
  { icon: 'cubesel' },
  { icon: 'rectsel', drop: true },
]
const snaps = [
  ['s1', true], ['s2', true], ['s3', true], ['s4'], ['s5'],
  ['s6', true], ['s7'], ['s8', true], ['s9'], ['s10'],
]

const rail = [
  ['asm', ''], ['partnav', 'active'], ['library', ''], ['html', 'apart'],
  ['clock', 'apart'], ['tools', ''], ['sheet', ''],
]

// tree guide lines, one 20px tall cell per row
const dots = (d) => `<path d="${d}" fill="none" stroke="#999" stroke-dasharray="1 1" shape-rendering="crispEdges"/>`
const toggle = (x) =>
  `<rect x="${x}.5" y="5.5" width="8" height="8" rx="1" fill="#fff" stroke="#888"/><path d="M${x + 2} 9.5h5" stroke="#333"/>`
const leaf = dots('M27.5 0V20M47.5 0V20M47 9.5H57')
const nodes = [
  { level: 0, mark: 'check', icon: 'drawings', text: '图纸', guide: dots('M13 9.5H19') + toggle(3) },
  { level: 1, mark: 'check', icon: 'page', text: '工作表 "Sheet 1" (工...', fresh: true, guide: dots('M27.5 0V20M32 9.5H38') + toggle(22) },
  { level: 2, mark: 'check', icon: 'imported', text: '导入的 "Front@1"', fresh: true, guide: leaf },
  { level: 2, mark: 'check', icon: 'imported', text: '导入的 "Front@4"', fresh: true, guide: leaf },
  { level: 2, mark: 'check', icon: 'ortho', text: '投影 "ORTHO@2"', fresh: true, guide: leaf },
  { level: 2, mark: 'check', icon: 'ortho', text: '投影 "ORTHO@3"', fresh: true, guide: dots('M27.5 0V20M47.5 0V10M47 9.5H57') },
  { level: 1, mark: 'quest', icon: 'folder', text: '过时', guide: dots('M27.5 0V10M27 9.5H38') },
]
const treeRows = [...nodes, ...Array.from({ length: 90 }, () => ({}))]

const docs = [
  { name: '2700底架总成_step-A.prt' },
  { name: '油箱支架-A.prt' },
  { name: '油箱支架-A_dwg1.prt', active: true },
]

const holes = [[856, 340.5], [990.5, 340.5], [856, 630.5], [990.5, 630.5]]
</script>

<style>
body { margin: 0; overflow: hidden; }
</style>

<style scoped>
.app {
  position: relative;
  display: flex; flex-direction: column;
  height: 100vh; overflow: hidden;
  font-family: 'Noto Sans', 'Noto Sans CJK SC', sans-serif;
  font-size: 12px; line-height: 16px; color: #111;
  background: #ebebeb;
}
button, select {
  font: inherit; color: inherit; margin: 0; padding: 0;
  border: 0; background: none; border-radius: 0;
}
button { display: flex; align-items: center; white-space: nowrap; flex-shrink: 0; }
.ic { display: block; flex-shrink: 0; }

/* Title bar */
.titlebar {
  display: flex; align-items: center; height: 25px; flex-shrink: 0;
  box-sizing: border-box; border-top: 1px solid #55565a;
  background: linear-gradient(90deg, #3a3a3a, #1c1c1c 440px);
  color: #fff;
}
.quick { display: flex; align-items: center; padding-left: 4px; gap: 7px; height: 20px; margin-bottom: 4px; }
.quick-btn { height: 18px; gap: 5px; color: #ccc; }
.quick-btn.sep { border-left: 1px solid #5c5c5c; padding-left: 6px; margin-left: -1px; }
.quick-btn.text { gap: 4px; }
.app-title { margin: 0 260px 2px auto; font-size: 12px; font-weight: 400; }

/* Tabs */
.tabs { display: flex; height: 29px; flex-shrink: 0; background: #1c1c1c; color: #fff; }
.file-tab {
  width: 78px; justify-content: center; margin-right: 2px;
  border-top: 1px solid #7f9dcb;
  background: linear-gradient(#4069a8, #1f4c92 50%, #2456a2 70%, #3f8ae0);
}
.tab { padding: 0 13px; }
.tab.active {
  color: #00004c; border-radius: 3px 3px 0 0; margin-top: 2px;
  background: linear-gradient(#fff, #f1f1f1 50%, #e6e6e6);
}

/* Ribbon */
.ribbon {
  display: flex; height: 97px; flex-shrink: 0; overflow: hidden;
  background: linear-gradient(#e4e4e4, #d8d8d8 50%, #c8c8c8);
  border-bottom: 1px solid #888;
}
.group { position: relative; display: flex; flex-direction: column; flex-shrink: 0; padding: 2px 11px 0; }
.group:first-child { padding: 2px 9px 0; }
.group:not(.last) { border-right: 1px solid #f8f8f8; }
.group.last { flex: 1; min-width: 0; }
.group-body { display: flex; gap: 9px; height: 73px; }
.col { display: flex; flex-direction: column; flex-shrink: 0; }
.rb { gap: 4px; height: 23px; }
.mid .rb { height: 36px; }
.big .rb { flex-direction: column; height: 69px; gap: 0; padding-top: 3px; min-width: 32px; box-sizing: border-box; }
.big .rb span { margin-top: 5px; }
.rb-caret { margin-top: 4px; }
.group-label { height: 22px; line-height: 22px; text-align: center; color: #444; }
.group-label.wide { padding-right: 20px; }
.launcher { position: absolute; right: 8px; bottom: 7px; }

/* Selection bar */
.selbar {
  display: flex; align-items: center; height: 31px; flex-shrink: 0;
  padding-left: 10px; background: linear-gradient(#c4c4c4, #d6d6d6 30%, #d8d8d8);
  border-bottom: 1px solid #b4b4b4;
}
.menu-btn { gap: 4px; height: 22px; padding-right: 7px; border-right: 1px solid #f4f4f4; }
.combo {
  position: relative; display: flex; height: 22px; box-sizing: border-box;
  border: 1px solid #707070; border-top-width: 2px; border-radius: 4px;
  background: #fff; overflow: hidden;
}
.combo select { appearance: none; flex: 1; min-width: 0; padding: 0 20px 0 3px; outline: 0; }
.combo-arrow {
  position: absolute; right: 0; top: 0; bottom: 0; width: 16px;
  display: flex; align-items: center; justify-content: center; pointer-events: none;
  background: linear-gradient(#d3e5fb, #8fbdf0 45%, #4f97e6 55%, #9fd8ff);
  border-left: 1px solid #3a72b8;
}
.combo.filter { width: 147px; margin-left: 11px; }
.combo.scope { width: 155px; margin-left: 9px; }
.sel-tools { display: flex; gap: 6px; margin-left: 10px; }
.sel-btn { height: 22px; }
.sel-btn.drop { gap: 5px; padding-right: 3px; }
.sel-btn:first-child + .sel-btn { margin-left: -3px; }
.snap-tools { display: flex; gap: 2px; margin-left: 4px; padding-right: 6px; border-right: 1px solid #f4f4f4; }
.snap { width: 23px; height: 22px; box-sizing: border-box; justify-content: center; border: 1px solid transparent; border-radius: 3px; }
.snap.on { background: #fff; border-color: #666; }

/* Work area */
.work { display: flex; flex: 1; min-height: 0; }
.rail {
  width: 31px; flex-shrink: 0; display: flex; flex-direction: column; align-items: flex-end; gap: 2px;
  background: linear-gradient(90deg, #b2b2b2, #a9a9a9 80%, #8b8b8b);
}
.rail-a { width: 31px; height: 43px; line-height: 32px; text-align: center; box-sizing: border-box; padding-right: 3px; }
.rail-btn {
  width: 27px; height: 40px; box-sizing: border-box; justify-content: center;
  border: 1px solid #666; border-right: 0; border-radius: 4px 0 0 4px;
  background: linear-gradient(90deg, #e2e2e2, #cdcdcd);
}
.rail-btn.active { width: 29px; background: #ebebeb; }
.rail-btn.apart { margin-top: 12px; }

/* Navigator */
.nav {
  width: 492px; flex-shrink: 0; box-sizing: border-box; padding: 0 10px 0 6px;
  display: flex; flex-direction: column;
  border-left: 1px solid #666; border-right: 1px solid #777; background: #ebebeb;
}
.nav-head { display: flex; align-items: center; justify-content: space-between; height: 30px; padding: 0 4px 0 5px; flex-shrink: 0; }
.nav-head h2 { margin: 0; font-size: 12px; font-weight: 700; }
.nav-max { width: 13px; height: 12px; border: 1px solid #000; border-top-width: 2px; }
.tree-wrap { flex: 1; min-height: 0; overflow: hidden; border: 1px solid #6b6b6b; background: #fff; }
.tree { width: 100%; table-layout: fixed; border-collapse: collapse; }
.c-name { width: 200px; }
.c-new { width: 100px; }
.tree th {
  height: 21px; padding: 2px 6px 0; box-sizing: border-box; text-align: left; font-weight: 400;
  background: linear-gradient(#f6f6f7, #ececee 50%, #dcdee0);
  border-right: 1px solid #b4b4b4; border-bottom: 1px solid #888;
}
.sort { display: inline-block; margin-left: 10px; }
.tree td { height: 20px; box-sizing: border-box; padding: 0; border-right: 1px solid #e4e4e4; border-bottom: 1px solid #e4e4e4; }
.tree tbody tr:nth-child(even) { background: #f6f6f6; }
.node {
  display: flex; align-items: center; height: 19px; box-sizing: border-box; padding: 2px 0 0 2px;
  color: #333; white-space: nowrap;
}
.node .ic + .ic { margin: 0 3px 0 1px; }
.guide { flex-shrink: 0; }
.fresh { margin: 2px 0 0 5px; }
.splitter { display: flex; align-items: center; gap: 6px; height: 12px; flex-shrink: 0; }
.splitter i { flex: 1; height: 1px; background: #b4b4b4; border-bottom: 1px solid #fff; }
.splitter b { width: 86px; height: 5px; background: #d2d2d2; border: 1px solid #999; border-top-color: #fff; border-left-color: #fff; }
.nav-foot { height: 38px; overflow: hidden; flex-shrink: 0; border: 1px solid #aaa; border-width: 0 1px; }

/* Section bars */
.bar {
  display: flex; width: 100%; height: 23px; margin-bottom: 1px; padding-left: 6px; box-sizing: border-box;
  justify-content: space-between; color: #00004c;
  background: linear-gradient(#fbfbfb, #f2f3f3 55%, #e0e2e3 56%, #d6d8da);
  border-bottom: 1px solid #888;
}
.bar.open { margin-bottom: 0; }
.bar-arrow { width: 22px; height: 22px; display: flex; align-items: center; justify-content: center; border-left: 1px solid #aaa; }

/* Documents */
.view { flex: 1; min-width: 0; display: flex; flex-direction: column; }
.docs { display: flex; height: 21px; flex-shrink: 0; background: #ebebeb; border-bottom: 2px solid #5a5a5a; }
.doc { gap: 8px; padding: 0 23px 0 6px; }
.doc .ic:first-child { margin-right: -5px; }
.doc.active { color: #fff; background: #5a5a5a; padding-right: 6px; margin-left: 1px; }
.canvas { position: relative; flex: 1; min-height: 0; background: #fff; overflow: hidden; }
.drawing { position: absolute; left: 1px; top: 0; }
.watermark {
  position: absolute; right: 4px; bottom: 1px; margin: 0;
  font-family: 'Liberation Mono', 'Noto Sans CJK SC', monospace;
  font-size: 13px; line-height: 20px; color: #666;
}
.watermark span { font-size: 16px; font-weight: 300; }

/* Dialog */
.dialog {
  position: absolute; left: 143px; top: 363px; width: 328px;
  border-radius: 7px 7px 6px 6px; overflow: hidden;
  background: #ebebeb; border-bottom: 8px solid #1a1a1a; box-sizing: border-box;
}
.dlg-head {
  display: flex; height: 22px; color: #fff;
  background: linear-gradient(#000, #55585a 2px, #333 9px, #191919 10px, #191919);
}
.dlg-gear { width: 22px; justify-content: center; border-right: 1px solid #ccc; }
.dlg-title { flex: 1; padding-left: 5px; line-height: 21px; }
.dlg-ctl { width: 21px; justify-content: center; border-left: 1px solid #ccc; }
.dlg-body { padding: 3px 6px 0; border: 1px solid #8a8a8a; border-width: 0 1px; }
.sect {
  padding: 6px 8px 8px 7px; margin-bottom: 1px; background: #d3d3d3;
  border: 1px solid #999; border-top: 0; border-bottom-color: #fff;
  box-shadow: inset 2px 2px 3px #aaa;
}
.pick {
  display: flex; align-items: center; gap: 4px; height: 31px; margin-bottom: 3px;
  border-radius: 5px; background: linear-gradient(90deg, #e4a66c 30%, #d3d3d3 90%);
}
.tool {
  width: 31px; height: 31px; margin-left: auto; box-sizing: border-box; justify-content: center;
  border: 2px solid #777; border-radius: 4px; background: linear-gradient(#fafafa, #e0e0e2 50%, #c8c9cc 51%, #f0f0f0);
}
.tool.hot { background: linear-gradient(#ffe2c8, #ffa466 50%, #ff8a3c 51%, #ffc190); }
.sub { padding: 0 8px 6px; background: #c3c3c3; border: 1px solid #7c7c7c; border-right-color: #f4f4f4; border-bottom-color: #f4f4f4; }
.sub-head { width: 100%; height: 23px; justify-content: space-between; color: #00004c; box-sizing: border-box; }
.sub > .sub-head:first-child .ic { margin-right: -5px; }
.sub-head.boxed, .sub-head.nested {
  padding: 0 4px 0 8px; border: 1px solid #7c7c7c; border-right-color: #f4f4f4; border-bottom-color: #f4f4f4;
  background: #c3c3c3;
}
.sub-head.nested { background: #b0b0b0; }
.sub + .boxed { margin-top: 3px; }
.row { display: flex; align-items: center; justify-content: space-between; height: 24px; margin-bottom: 3px; }
.row:last-child { margin-bottom: 0; }
.row.tall { height: 31px; }
.row.inner { height: 33px; box-sizing: border-box; padding-top: 2px; margin: 0; }
.row .combo { width: 139px; height: 24px; }
.combo-icon { align-self: center; margin-left: 4px; }
.combo.picked select { margin: 1px 18px 1px 1px; padding: 0 0 0 2px; background: #0a7bdc; color: #fff; outline: 1px dotted #f0a050; }
.aa { align-items: baseline; gap: 0; color: #10108c; }
.aa small { align-self: flex-start; font-size: 12px; line-height: 14px; }
.aa em { font-family: 'Liberation Serif', serif; font-weight: 700; font-size: 20px; line-height: 26px; text-decoration: underline; color: #1414c8; }
.dlg-foot { display: flex; justify-content: flex-end; margin-top: 2px; padding: 5px 10px 5px; border-top: 1px solid #aaa; }
.ok {
  width: 52px; height: 24px; justify-content: center; box-sizing: border-box;
  border: 2px solid #4d6a4a; border-radius: 4px;
  background: linear-gradient(#d9f0d3, #a4d898 45%, #66c04c 55%, #b8f598);
}

.pointer { position: absolute; left: 442px; top: 633px; pointer-events: none; }
</style>
